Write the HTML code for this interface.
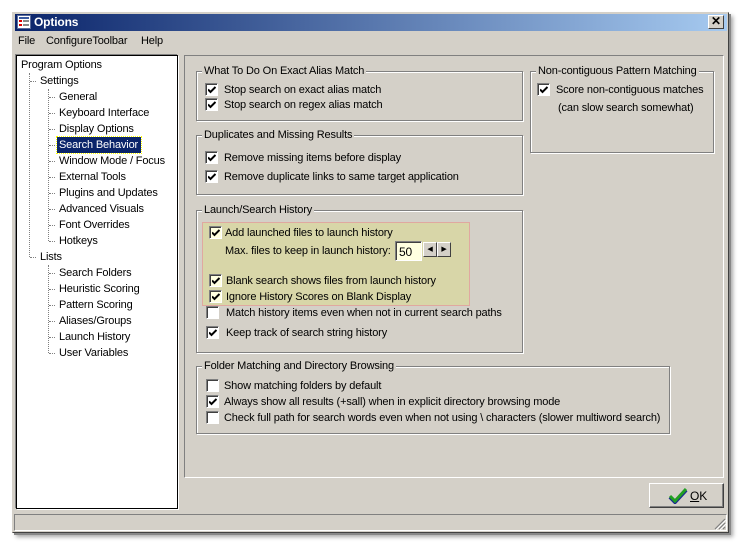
<!DOCTYPE html>
<html><head><style>
*{margin:0;padding:0;box-sizing:border-box}
body{width:741px;height:545px;background:#fff;position:relative;overflow:hidden;font-family:"Liberation Sans",sans-serif;font-size:11px;color:#000;letter-spacing:-0.15px}
.a{position:absolute}
.win{left:12px;top:12px;width:717px;height:521px;background:#d4d0c8;border:1px solid #d4d0c8;box-shadow:2px 2px 0 #888,4px 4px 4px rgba(0,0,0,.35);border-right:1px solid #404040;border-bottom:1px solid #404040}
.title{left:15px;top:14px;width:712px;height:17px;background:linear-gradient(90deg,#0a246a,#a6caf0)}
.t{white-space:nowrap;line-height:13px}
.grp{position:absolute;border:1px solid #808080;box-shadow:inset 1px 1px 0 #fff,1px 1px 0 #fff}
.grp>.lg{position:absolute;top:-7px;left:5px;background:#d4d0c8;padding:0 2px;white-space:nowrap;line-height:13px}
.cb{position:absolute;width:13px;height:13px;background:#fff;border:1px solid;border-color:#808080 #fff #fff #808080;box-shadow:inset 1px 1px 0 #404040}
.cb svg{position:absolute;left:2px;top:2px}
.tl{position:absolute;white-space:nowrap;line-height:13px;margin-top:1px}
.dv{position:absolute;border-left:1px dotted #808080;width:0}
.dh{position:absolute;border-top:1px dotted #808080;height:0;width:6px}
</style></head><body>
<div class="a win"></div>
<div class="a title"></div>
<div class="a" style="left:17px;top:15px;width:14px;height:14px;background:#fff;border:1px solid #5a6b9a">
<div class="a" style="left:1px;top:1px;width:10px;height:2px;background:#3a5aa0"></div>
<div class="a" style="left:1px;top:4px;width:3px;height:2px;background:#d00"></div><div class="a" style="left:5px;top:4px;width:6px;height:2px;background:#888"></div>
<div class="a" style="left:1px;top:8px;width:3px;height:2px;background:#d00"></div><div class="a" style="left:5px;top:8px;width:6px;height:2px;background:#888"></div>
</div>
<div class="a t" style="left:34px;top:16px;color:#fff;font-weight:bold;font-size:12px">Options</div>
<div class="a" style="left:708px;top:15px;width:16px;height:14px;background:#d4d0c8;border:1px solid;border-color:#fff #404040 #404040 #fff;font-weight:bold;font-size:12px;line-height:11px;text-align:center">✕</div>
<div class="a t" style="left:18px;top:35px">File</div>
<div class="a t" style="left:46px;top:35px">ConfigureToolbar</div>
<div class="a t" style="left:141px;top:35px">Help</div>

<div class="a" style="left:16px;top:55px;width:162px;height:454px;background:#fff;border:1px solid #000;box-shadow:-1px -1px 0 #808080,1px 1px 0 #fff"></div>
<div class="dv" style="left:29px;top:73px;height:184px"></div>
<div class="dv" style="left:48px;top:89px;height:152px"></div>
<div class="dv" style="left:48px;top:265px;height:88px"></div>
<div class="a" style="left:57px;top:137px;width:84px;height:16px;background:#0a246a;outline:1px dotted #ff0"></div>
<div class="tl" style="left:21px;top:58px">Program Options</div>
<div class="dh" style="left:30px;top:81px"></div><div class="tl" style="left:40px;top:74px">Settings</div>
<div class="dh" style="left:49px;top:97px"></div><div class="tl" style="left:59px;top:90px">General</div>
<div class="dh" style="left:49px;top:113px"></div><div class="tl" style="left:59px;top:106px">Keyboard Interface</div>
<div class="dh" style="left:49px;top:129px"></div><div class="tl" style="left:59px;top:122px">Display Options</div>
<div class="dh" style="left:49px;top:145px"></div><div class="tl" style="left:59px;top:138px;color:#fff">Search Behavior</div>
<div class="dh" style="left:49px;top:161px"></div><div class="tl" style="left:59px;top:154px">Window Mode / Focus</div>
<div class="dh" style="left:49px;top:177px"></div><div class="tl" style="left:59px;top:170px">External Tools</div>
<div class="dh" style="left:49px;top:193px"></div><div class="tl" style="left:59px;top:186px">Plugins and Updates</div>
<div class="dh" style="left:49px;top:209px"></div><div class="tl" style="left:59px;top:202px">Advanced Visuals</div>
<div class="dh" style="left:49px;top:225px"></div><div class="tl" style="left:59px;top:218px">Font Overrides</div>
<div class="dh" style="left:49px;top:241px"></div><div class="tl" style="left:59px;top:234px">Hotkeys</div>
<div class="dh" style="left:30px;top:257px"></div><div class="tl" style="left:40px;top:250px">Lists</div>
<div class="dh" style="left:49px;top:273px"></div><div class="tl" style="left:59px;top:266px">Search Folders</div>
<div class="dh" style="left:49px;top:289px"></div><div class="tl" style="left:59px;top:282px">Heuristic Scoring</div>
<div class="dh" style="left:49px;top:305px"></div><div class="tl" style="left:59px;top:298px">Pattern Scoring</div>
<div class="dh" style="left:49px;top:321px"></div><div class="tl" style="left:59px;top:314px">Aliases/Groups</div>
<div class="dh" style="left:49px;top:337px"></div><div class="tl" style="left:59px;top:330px">Launch History</div>
<div class="dh" style="left:49px;top:353px"></div><div class="tl" style="left:59px;top:346px">User Variables</div>

<div class="a" style="left:184px;top:55px;width:540px;height:423px;border:1px solid;border-color:#808080 #fff #fff #808080"></div>

<div class="grp" style="left:196px;top:71px;width:327px;height:50px"><span class="lg">What To Do On Exact Alias Match</span></div>
<div class="grp" style="left:196px;top:135px;width:327px;height:60px"><span class="lg">Duplicates and Missing Results</span></div>
<div class="grp" style="left:196px;top:210px;width:327px;height:143px"><span class="lg">Launch/Search History</span></div>
<div class="grp" style="left:530px;top:71px;width:184px;height:82px"><span class="lg">Non-contiguous Pattern Matching</span></div>
<div class="grp" style="left:196px;top:366px;width:474px;height:68px"><span class="lg">Folder Matching and Directory Browsing</span></div>

<div class="a" style="left:202px;top:222px;width:268px;height:84px;background:#d8d6a8;border:1px solid #e0a8a0"></div>

<div id="cbs"></div>
<div class="tl" style="left:224px;top:83px">Stop search on exact alias match</div>
<div class="tl" style="left:224px;top:98px">Stop search on regex alias match</div>
<div class="tl" style="left:224px;top:151px">Remove missing items before display</div>
<div class="tl" style="left:224px;top:170px">Remove duplicate links to same target application</div>
<div class="tl" style="left:225px;top:226px">Add launched files to launch history</div>
<div class="tl" style="left:225px;top:244px">Max. files to keep in launch history:</div>
<div class="a" style="left:395px;top:241px;width:27px;height:20px;background:#ffffe0;border:1px solid;border-color:#808080 #fff #fff #808080;box-shadow:inset 1px 1px 0 #404040;padding:3px 0 0 3px;font-size:12px">50</div>
<div class="a" style="left:423px;top:242px;width:14px;height:15px;border:1px solid;border-color:#fff #404040 #404040 #fff;background:#d4d0c8;font-size:7px;text-align:center;line-height:13px">◀</div>
<div class="a" style="left:437px;top:242px;width:14px;height:15px;border:1px solid;border-color:#fff #404040 #404040 #fff;background:#d4d0c8;font-size:7px;text-align:center;line-height:13px">▶</div>
<div class="tl" style="left:226px;top:274px">Blank search shows files from launch history</div>
<div class="tl" style="left:226px;top:290px">Ignore History Scores on Blank Display</div>
<div class="tl" style="left:226px;top:306px">Match history items even when not in current search paths</div>
<div class="tl" style="left:226px;top:326px">Keep track of search string history</div>
<div class="tl" style="left:556px;top:83px">Score non-contiguous matches</div>
<div class="tl" style="left:558px;top:101px">(can slow search somewhat)</div>
<div class="tl" style="left:224px;top:379px">Show matching folders by default</div>
<div class="tl" style="left:224px;top:395px">Always show all results (+sall) when in explicit directory browsing mode</div>
<div class="tl" style="left:224px;top:411px">Check full path for search words even when not using \ characters (slower multiword search)</div>

<div class="a" style="left:649px;top:483px;width:75px;height:25px;border:1px solid;border-color:#fff #404040 #404040 #fff;box-shadow:inset -1px -1px 0 #808080;background:#d4d0c8">
<svg class="a" style="left:18px;top:4px" width="20" height="16" viewBox="0 0 20 16"><path d="M2 9 L7 14 L18 2" fill="none" stroke="#1a2a90" stroke-width="4"/><path d="M2 8 L7 13 L18 1" fill="none" stroke="#22a022" stroke-width="3"/></svg>
<span class="tl" style="left:40px;top:5px;font-size:12px"><u>O</u>K</span></div>

<div class="a" style="left:14px;top:514px;width:713px;height:17px;border:1px solid;border-color:#808080 #fff #fff #808080"></div>
<svg class="a" style="left:714px;top:518px" width="12" height="12"><path d="M11 1L1 11M11 5L5 11M11 9L9 11" stroke="#808080" stroke-width="1.2"/><path d="M12 2L2 12M12 6L6 12" stroke="#fff"/></svg>

<script>
var c=[[205,83,1],[205,98,1],[205,151,1],[205,170,1],[209,226,1,1],[209,274,1,1],[209,290,1,1],[206,306,0],[206,326,1],[537,83,1],[206,379,0],[206,395,1],[206,411,0]];
var h='';c.forEach(function(a){h+='<div class="cb" style="left:'+a[0]+'px;top:'+a[1]+'px;'+(a[3]?'background:#ffffe0':'')+'">'+(a[2]?'<svg width="8" height="8" viewBox="0 0 8 8"><path d="M0 3.5L2.5 6L7.5 1" fill="none" stroke="#000" stroke-width="2"/></svg>':'')+'</div>';});
document.getElementById('cbs').innerHTML=h;
</script>
</body></html>
